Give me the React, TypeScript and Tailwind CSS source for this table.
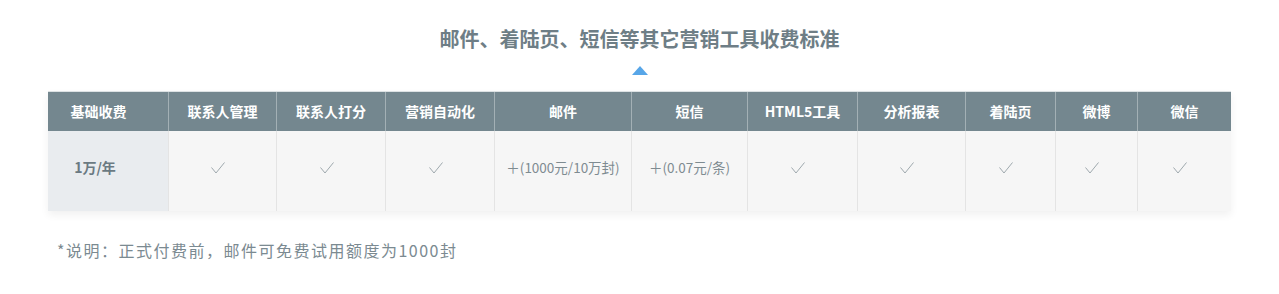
const heads = ["基础收费", "联系人管理", "联系人打分", "营销自动化", "邮件", "短信", "HTML5工具", "分析报表", "着陆页", "微博", "微信"];
const cells = ["1万/年", "√", "√", "√", "＋(1000元/10万封)", "＋(0.07元/条)", "√", "√", "√", "√", "√"];
const widths = ["w-[120px]", "w-[108px]", "w-[109px]", "w-[109px]", "w-[137px]", "w-[116px]", "w-[110px]", "w-[108px]", "w-[90px]", "w-[82px]", "w-[94px]"];

function Check() {
  return (
    <svg width="14" height="12" viewBox="0 0 14 12" fill="none" className="mr-[9px] mt-[1px]">
      <path d="M0.5 5.5 L5 11 L13.5 0.5" stroke="#9ea8ad" strokeWidth="1" />
    </svg>
  );
}

export default function App() {
  return (
    <div className="w-[1279px] h-[294px] bg-white" style={{ fontFamily: '"Noto Sans CJK SC", "Noto Sans", sans-serif' }}>
      <h2 className="pt-[24px] text-center text-[20px] leading-[30px] font-bold text-[#6e7e86]">
        邮件、着陆页、短信等其它营销工具收费标准
      </h2>
      <div className="flex justify-center mt-[12px]">
        <div className="w-0 h-0 border-l-[8px] border-r-[8px] border-b-[9px] border-l-transparent border-r-transparent border-b-[#57a6e8]" />
      </div>
      <div className="ml-[48px] mt-[16px] w-[1183px] border-t border-[#dde2e4] shadow-[0_4px_8px_rgba(0,0,0,0.06)]">
        <div className="flex bg-[#74878f]">
          {heads.map((h, i) => (
            <div key={i} className={`${widths[i]} h-[39px] flex items-center justify-center text-[14px] font-bold text-white ${i > 0 ? "border-l border-[#a3b0b5]" : "pr-[19px]"}`}>
              {h}
            </div>
          ))}
        </div>
        <div className="flex">
          {cells.map((c, i) => (
            <div
              key={i}
              className={`${widths[i]} h-[80px] pb-[8px] flex items-center justify-center ${
                i === 0
                  ? "bg-[#e9ecef] pr-[26px] text-[14px] font-bold text-[#6b7a82]"
                  : "bg-[#f6f6f6] border-l border-[#e4e4e4] text-[13.5px] text-[#7e8b91]"
              }`}
            >
              {c === "√" ? <Check /> : c}
            </div>
          ))}
        </div>
      </div>
      <p className="ml-[57px] mt-[28px] text-[16px] leading-[22px] tracking-[1.5px] text-[#7b8a91]">*说明：正式付费前，邮件可免费试用额度为1000封</p>
    </div>
  );
}
